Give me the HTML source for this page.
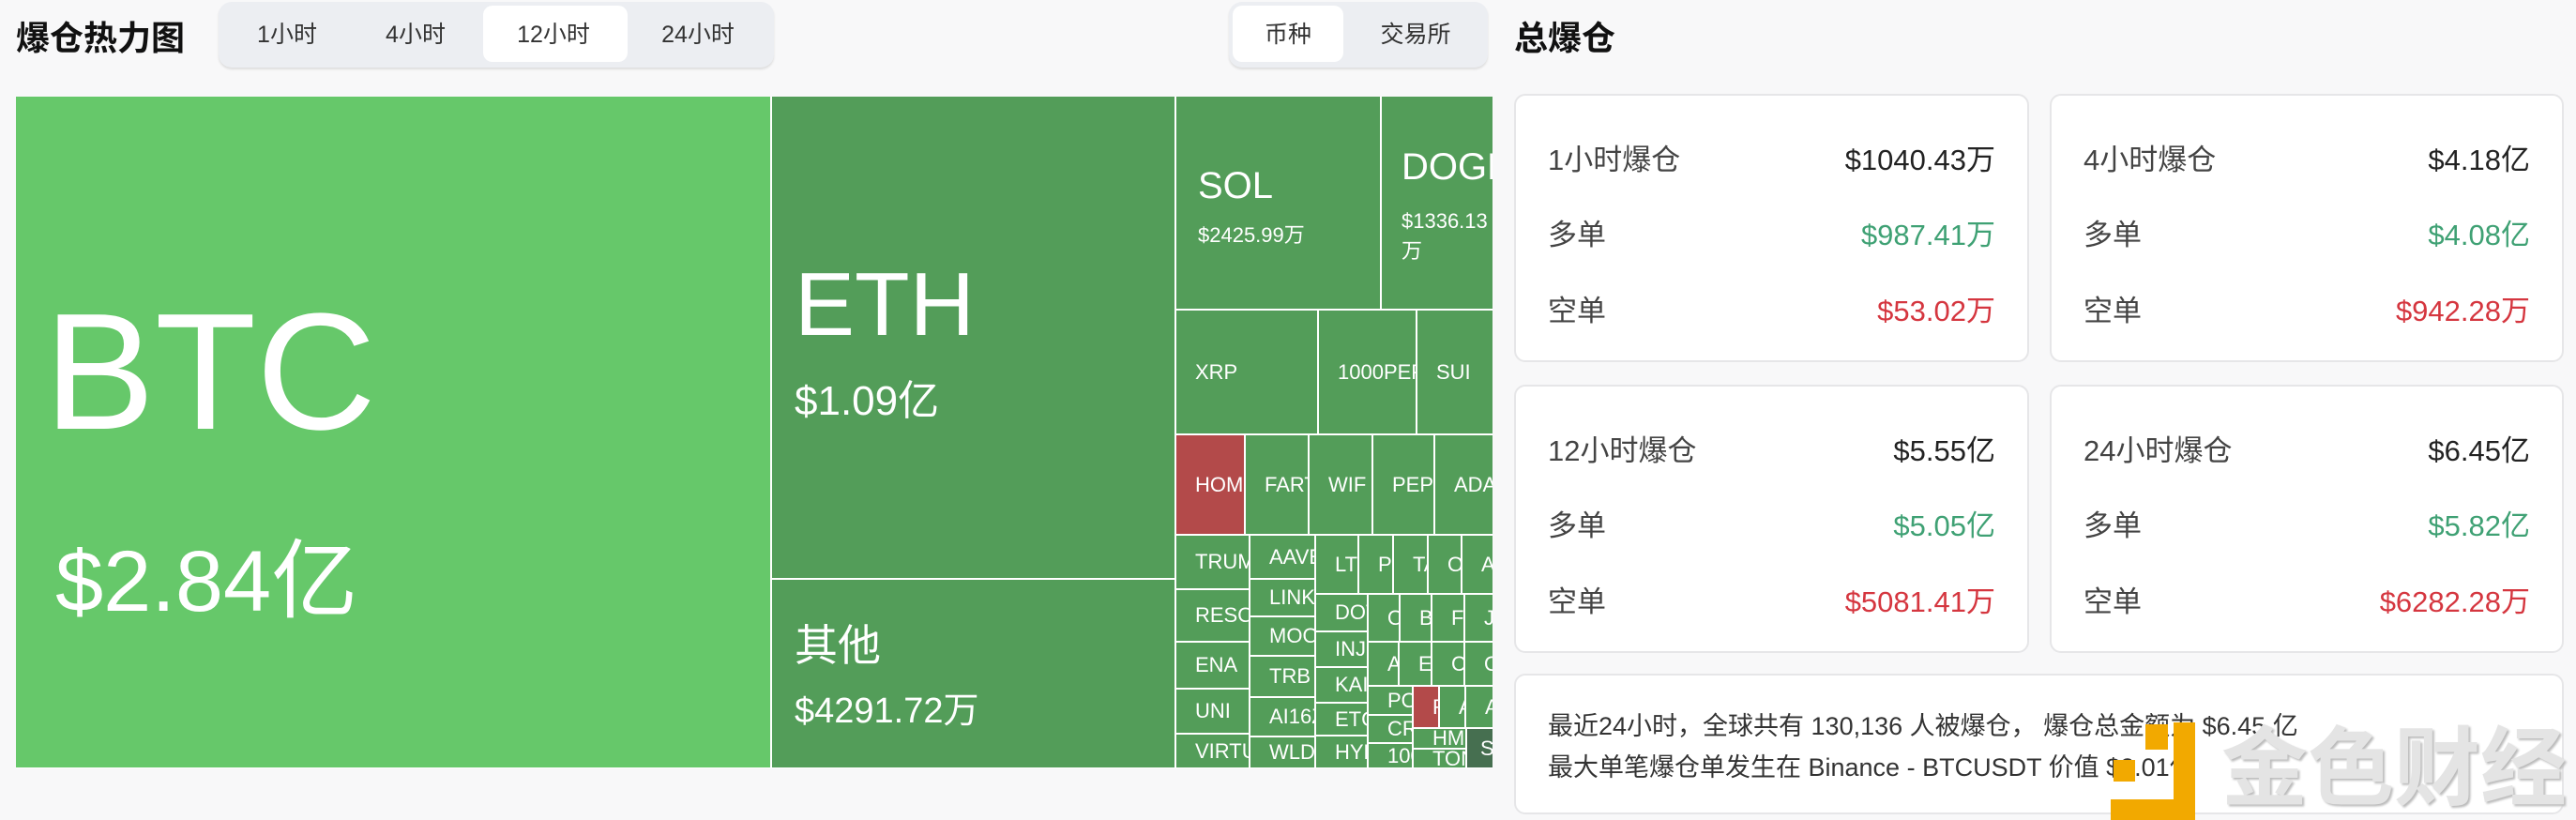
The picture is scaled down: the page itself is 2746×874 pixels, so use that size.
<!DOCTYPE html>
<html style="overflow:hidden;width:2746px;height:874px"><head><meta charset="utf-8"><style>
*{margin:0;padding:0;box-sizing:border-box}
body{width:2746px;height:874px;background:#f8f8f9;font-family:"Liberation Sans","Noto Sans CJK SC",sans-serif;position:relative;overflow:hidden}
.a{position:absolute;white-space:nowrap}
.c{position:absolute;background:#539d59;color:#fff;overflow:hidden;white-space:nowrap;font-size:22px;display:flex;align-items:center;padding-left:20px}
.r{background:#b34a4a}
.tab{position:absolute;font-size:25px;color:#333;text-align:center;line-height:66px;top:4px;height:66px}
.card{position:absolute;background:#fff;border:2px solid #e6e6e8;border-radius:12px}
.row{position:absolute;left:34px;right:34px;display:flex;justify-content:space-between;font-size:31px;color:#444}
.g{color:#3fa174}.rd{color:#d5363f}
</style></head><body>
<div class="a" style="left:17px;top:12px;font-size:36px;font-weight:bold;color:#111">爆仓热力图</div>
<div class="a" style="left:233px;top:2px;width:592px;height:70px;background:#eceef2;border-radius:14px;box-shadow:0 2px 2px #ddd"></div>
<div class="a" style="left:515px;top:6px;width:154px;height:60px;background:#fff;border-radius:10px"></div>
<div class="tab" style="left:250px;width:112px">1小时</div>
<div class="tab" style="left:387px;width:112px">4小时</div>
<div class="tab" style="left:534px;width:112px">12小时</div>
<div class="tab" style="left:688px;width:112px">24小时</div>
<div class="a" style="left:1310px;top:2px;width:276px;height:70px;background:#eceef2;border-radius:14px;box-shadow:0 2px 2px #ddd"></div>
<div class="a" style="left:1314px;top:6px;width:118px;height:60px;background:#fff;border-radius:10px"></div>
<div class="tab" style="left:1314px;width:118px">币种</div>
<div class="tab" style="left:1450px;width:118px">交易所</div>

<div class="a" style="left:17px;top:103px;width:1574px;height:716px;background:#fff"></div>
<div class="c" style="left:17px;top:103px;width:804px;height:715px;background:#66c86a;display:block;padding:0">
 <div class="a" style="left:30px;top:205px;font-size:177px;line-height:177px">BTC</div>
 <div class="a" style="left:42px;top:462px;font-size:92px;line-height:110px">$2.84亿</div></div>
<div class="c" style="left:823px;top:103px;width:429px;height:513px;display:block;padding:0">
 <div class="a" style="left:24px;top:172px;font-size:96px;line-height:100px">ETH</div>
 <div class="a" style="left:24px;top:300px;font-size:44px;line-height:50px">$1.09亿</div></div>
<div class="c" style="left:823px;top:618px;width:429px;height:200px;display:block;padding:0">
 <div class="a" style="left:24px;top:40px;font-size:46px;line-height:60px">其他</div>
 <div class="a" style="left:24px;top:115px;font-size:38px;line-height:50px">$4291.72万</div></div>
<div class="c" style="left:1254px;top:103px;width:217px;height:226px;display:block;padding:0">
 <div class="a" style="left:23px;top:70px;font-size:40px;line-height:50px">SOL</div>
 <div class="a" style="left:23px;top:130px;font-size:22px">$2425.99万</div></div>
<div class="c" style="left:1473px;top:103px;width:118px;height:226px;display:block;padding:0">
 <div class="a" style="left:21px;top:50px;font-size:40px;line-height:50px">DOGE</div>
 <div class="a" style="left:21px;top:117px;font-size:22px;line-height:32px">$1336.13<br>万</div></div>
<div class="c" style="left:1254px;top:331px;width:150px;height:131px">XRP</div>
<div class="c" style="left:1406px;top:331px;width:103px;height:131px;padding-left:20px">1000PEPE</div>
<div class="c" style="left:1511px;top:331px;width:80px;height:131px;padding-left:20px">SUI</div>
<div class="c r" style="left:1254px;top:464px;width:72px;height:105px">HOME</div>
<div class="c" style="left:1328px;top:464px;width:66px;height:105px">FART</div>
<div class="c" style="left:1396px;top:464px;width:66px;height:105px">WIF</div>
<div class="c" style="left:1464px;top:464px;width:64px;height:105px">PEPE</div>
<div class="c" style="left:1530px;top:464px;width:61px;height:105px">ADA</div>
<div class="c" style="left:1254px;top:571px;width:77px;height:56px">TRUMP</div>
<div class="c" style="left:1254px;top:629px;width:77px;height:54px">RESOLV</div>
<div class="c" style="left:1254px;top:685px;width:77px;height:48px">ENA</div>
<div class="c" style="left:1254px;top:735px;width:77px;height:46px">UNI</div>
<div class="c" style="left:1254px;top:783px;width:77px;height:35px">VIRTUAL</div>
<div class="c" style="left:1333px;top:571px;width:68px;height:45px">AAVE</div>
<div class="c" style="left:1333px;top:618px;width:68px;height:38px">LINK</div>
<div class="c" style="left:1333px;top:658px;width:68px;height:40px">MOODENG</div>
<div class="c" style="left:1333px;top:700px;width:68px;height:42px">TRB</div>
<div class="c" style="left:1333px;top:744px;width:68px;height:40px">AI16Z</div>
<div class="c" style="left:1333px;top:786px;width:68px;height:32px">WLD</div>
<div class="c" style="left:1403px;top:571px;width:44px;height:61px">LTC</div>
<div class="c" style="left:1449px;top:571px;width:35px;height:61px;padding-left:20px">PNUT</div>
<div class="c" style="left:1486px;top:571px;width:35px;height:61px;padding-left:20px">TAO</div>
<div class="c" style="left:1523px;top:571px;width:34px;height:61px;padding-left:20px">OP</div>
<div class="c" style="left:1559px;top:571px;width:32px;height:61px;padding-left:20px">AVAX</div>
<div class="c" style="left:1403px;top:634px;width:54px;height:38px">DOT</div>
<div class="c" style="left:1403px;top:674px;width:54px;height:36px">INJ</div>
<div class="c" style="left:1403px;top:712px;width:54px;height:36px">KAITO</div>
<div class="c" style="left:1403px;top:750px;width:54px;height:33px">ETC</div>
<div class="c" style="left:1403px;top:785px;width:54px;height:33px">HYPE</div>
<div class="c" style="left:1459px;top:634px;width:32px;height:49px;padding-left:20px">ONDO</div>
<div class="c" style="left:1493px;top:634px;width:32px;height:49px;padding-left:20px">BNB</div>
<div class="c" style="left:1527px;top:634px;width:33px;height:49px;padding-left:20px">FIL</div>
<div class="c" style="left:1562px;top:634px;width:29px;height:49px;padding-left:20px">JUP</div>
<div class="c" style="left:1459px;top:685px;width:31px;height:45px;padding-left:20px">ARB</div>
<div class="c" style="left:1492px;top:685px;width:33px;height:45px;padding-left:20px">EOS</div>
<div class="c" style="left:1527px;top:685px;width:33px;height:45px;padding-left:20px">CRV</div>
<div class="c" style="left:1562px;top:685px;width:29px;height:45px;padding-left:20px">ORDI</div>
<div class="c" style="left:1459px;top:732px;width:46px;height:29px">POPCAT</div>
<div class="c" style="left:1459px;top:763px;width:46px;height:28px">CRV</div>
<div class="c" style="left:1459px;top:793px;width:46px;height:25px">1000</div>
<div class="c r" style="left:1507px;top:732px;width:26px;height:43px;padding-left:20px">RE</div>
<div class="c" style="left:1535px;top:732px;width:26px;height:43px;padding-left:20px">AI</div>
<div class="c" style="left:1563px;top:732px;width:28px;height:43px;padding-left:20px">AP</div>
<div class="c" style="left:1507px;top:777px;width:55px;height:20px;padding-left:20px">HMSTR</div>
<div class="c" style="left:1507px;top:799px;width:55px;height:19px;padding-left:20px">TON</div>
<div class="c" style="left:1564px;top:777px;width:27px;height:41px;background:#466f50;padding-left:14px">S</div>

<div class="a" style="left:1614px;top:12px;font-size:36px;font-weight:bold;color:#111">总爆仓</div>
<div class="card" style="left:1614px;top:100px;width:549px;height:286px">
 <div class="row" style="top:43px"><span>1小时爆仓</span><span style="color:#222">$1040.43万</span></div>
 <div class="row" style="top:123px"><span>多单</span><span class="g">$987.41万</span></div>
 <div class="row" style="top:204px"><span>空单</span><span class="rd">$53.02万</span></div></div>
<div class="card" style="left:2185px;top:100px;width:548px;height:286px">
 <div class="row" style="top:43px"><span>4小时爆仓</span><span style="color:#222">$4.18亿</span></div>
 <div class="row" style="top:123px"><span>多单</span><span class="g">$4.08亿</span></div>
 <div class="row" style="top:204px"><span>空单</span><span class="rd">$942.28万</span></div></div>
<div class="card" style="left:1614px;top:410px;width:549px;height:286px">
 <div class="row" style="top:43px"><span>12小时爆仓</span><span style="color:#222">$5.55亿</span></div>
 <div class="row" style="top:123px"><span>多单</span><span class="g">$5.05亿</span></div>
 <div class="row" style="top:204px"><span>空单</span><span class="rd">$5081.41万</span></div></div>
<div class="card" style="left:2185px;top:410px;width:548px;height:286px">
 <div class="row" style="top:43px"><span>24小时爆仓</span><span style="color:#222">$6.45亿</span></div>
 <div class="row" style="top:123px"><span>多单</span><span class="g">$5.82亿</span></div>
 <div class="row" style="top:204px"><span>空单</span><span class="rd">$6282.28万</span></div></div>
<div class="card" style="left:1614px;top:718px;width:1119px;height:150px">
 <div class="a" style="left:34px;top:32px;font-size:27px;color:#333;line-height:44px">最近24小时，全球共有 130,136 人被爆仓， 爆仓总金额为 $6.45 亿<br>最大单笔爆仓单发生在 Binance - BTCUSDT 价值 $2.01亿</div></div>
<div class="a" style="left:2287px;top:772px;width:24px;height:27px;background:#f2a900"></div>
<div class="a" style="left:2253px;top:810px;width:23px;height:23px;background:#f2a900"></div>
<div class="a" style="left:2317px;top:770px;width:23px;height:110px;background:#f2a900"></div>
<div class="a" style="left:2250px;top:852px;width:90px;height:30px;background:#f2a900"></div>
<div class="a" style="left:2368px;top:770px;font-size:92px;line-height:100px;color:#e4e4e4;text-shadow:2px 2px 2px #bbb;font-weight:bold">金色财经</div>
</body></html>
